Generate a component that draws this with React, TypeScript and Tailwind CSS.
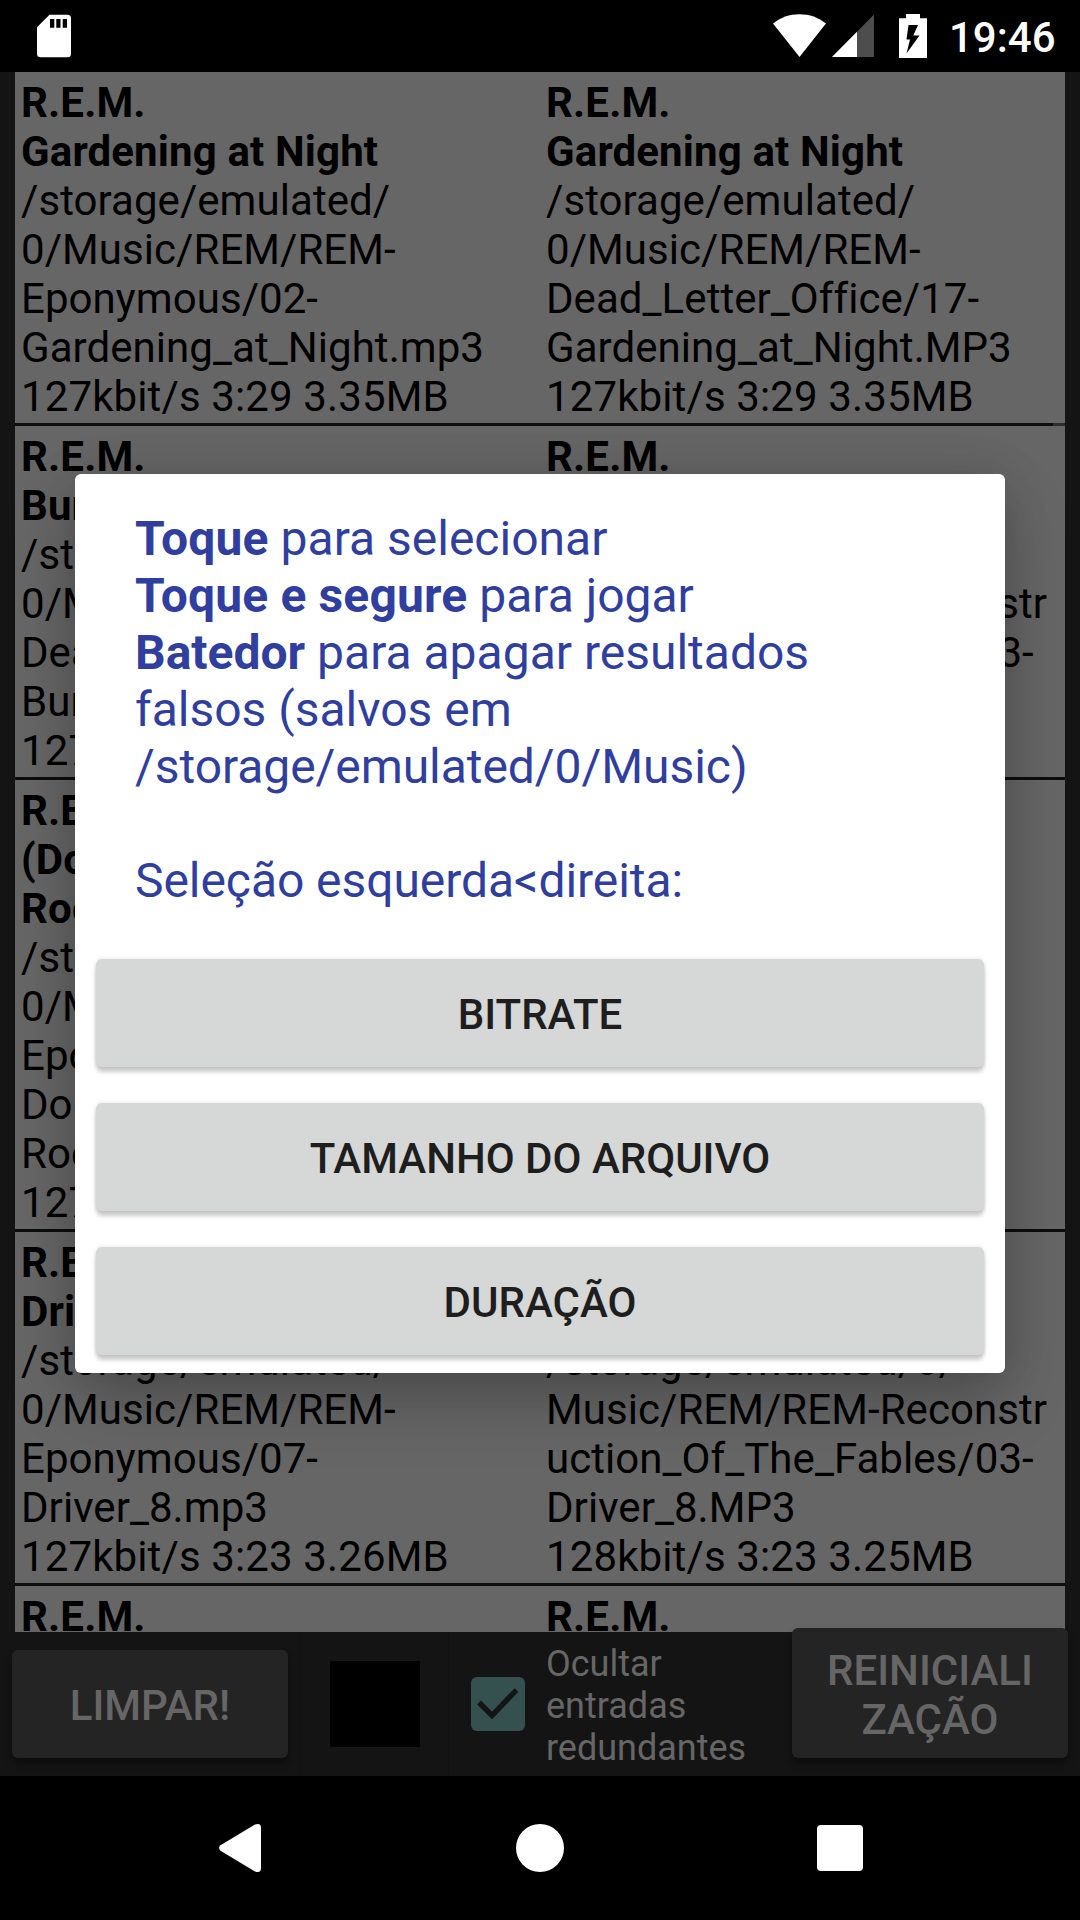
import { clsx } from 'clsx'

interface Track {
  artist: string
  title: string[]
  path: string[]
  info: string
}

const pairs: [Track, Track][] = [
  [
    {
      artist: 'R.E.M.',
      title: ['Gardening at Night'],
      path: ['/storage/emulated/', '0/Music/REM/REM-', 'Eponymous/02-', 'Gardening_at_Night.mp3'],
      info: '127kbit/s 3:29 3.35MB',
    },
    {
      artist: 'R.E.M.',
      title: ['Gardening at Night'],
      path: ['/storage/emulated/', '0/Music/REM/REM-', 'Dead_Letter_Office/17-', 'Gardening_at_Night.MP3'],
      info: '127kbit/s 3:29 3.35MB',
    },
  ],
  [
    {
      artist: 'R.E.M.',
      title: ['Burning Down'],
      path: ['/storage/emulated/', '0/Music/REM/REM-', 'Dead_Letter_Office/03-', 'Burning_Down.MP3'],
      info: '127kbit/s 4:12 4.03MB',
    },
    {
      artist: 'R.E.M.',
      title: ['Burning Down'],
      path: ['/storage/emulated/0/', 'Music/REM/REM-Reconstr', 'uction_Of_The_Fables/03-', 'Burning_Down.MP3'],
      info: '128kbit/s 4:12 4.03MB',
    },
  ],
  [
    {
      artist: 'R.E.M.',
      title: ["(Don't Go Back To)", 'Rockville'],
      path: ['/storage/emulated/', '0/Music/REM/REM-', 'Eponymous/05-', "Don't_Go_Back_To_", 'Rockville.mp3'],
      info: '127kbit/s 4:32 4.36MB',
    },
    {
      artist: 'R.E.M.',
      title: ["(Don't Go Back To)", 'Rockville'],
      path: ['/storage/emulated/', '0/Music/REM/REM-', 'Reckoning/09-', "Don't_Go_Back_To_", 'Rockville.MP3'],
      info: '128kbit/s 4:32 4.35MB',
    },
  ],
  [
    {
      artist: 'R.E.M.',
      title: ['Driver 8'],
      path: ['/storage/emulated/', '0/Music/REM/REM-', 'Eponymous/07-', 'Driver_8.mp3'],
      info: '127kbit/s 3:23 3.26MB',
    },
    {
      artist: 'R.E.M.',
      title: ['Driver 8'],
      path: ['/storage/emulated/0/', 'Music/REM/REM-Reconstr', 'uction_Of_The_Fables/03-', 'Driver_8.MP3'],
      info: '128kbit/s 3:23 3.25MB',
    },
  ],
  [
    { artist: 'R.E.M.', title: [], path: [], info: '' },
    { artist: 'R.E.M.', title: [], path: [], info: '' },
  ],
]

const sortOptions = ['Bitrate', 'Tamanho do arquivo', 'Duração']

export default function App() {
  return (
    <div className="relative flex h-[1920px] w-[1080px] flex-col overflow-hidden bg-[#141414] font-['Roboto',sans-serif]">
      <StatusBar />
      <main className="mx-[15px] h-[1560px] shrink-0 overflow-hidden bg-[#666666]">
        {pairs.map((pair, i) => (
          <PairRow key={i} pair={pair} scrollMark={i === 0} />
        ))}
      </main>
      <BottomBar />
      <NavBar />
      <SelectDialog />
    </div>
  )
}

function StatusBar() {
  return (
    <header className="flex h-[72px] shrink-0 items-start bg-black pr-[24px] pl-[37px] text-white">
      <svg className="mt-[14px] h-[44px] w-[34px]" viewBox="0 0 34 44" fill="currentColor">
        <path d="M12.5 .7H30.5Q34 .7 34 4.2V39.8Q34 43.3 30.5 43.3H3.5Q0 43.3 0 39.8V13.2Z" />
        <path fill="#000" d="M13 5h4.3v8.7H13zM19.3 5h4.2v8.7h-4.2zM25.7 5H30v8.7h-4.3z" />
      </svg>
      <svg className="mt-[14px] ml-auto h-[43px] w-[53px]" viewBox="0 0 53 43" fill="currentColor">
        <path d="M26.5 43L0 9.6C7.5 3.5 16.5 .3 26.5 .3S45.5 3.5 53 9.6Z" />
      </svg>
      <svg className="mt-[14px] ml-[6px] h-[43px] w-[42px]" viewBox="0 0 42 43" fill="currentColor">
        <path d="M42 .5V43H0Z" fill="#4d4d4d" />
        <path d="M25 17.7V43H0Z" />
      </svg>
      <svg className="mt-[14px] ml-[25px] h-[44px] w-[28px]" viewBox="0 0 28 44">
        <path fill="#fff" d="M7 0H21V4.3H28V44H0V4.3H7Z" />
        <path fill="#000" d="M9.5 11H19L14.3 21.5H20.5L7.5 39.5L11 25.5H7.5Z" />
      </svg>
      <span className="mt-[13px] ml-[22px] w-[107px] text-[42px] leading-[49px] font-medium">19:46</span>
    </header>
  )
}

function PairRow({ pair, scrollMark }: { pair: [Track, Track]; scrollMark: boolean }) {
  return (
    <>
      <div className="grid grid-cols-2 pt-[6px] pb-[2px]">
        <TrackCell track={pair[0]} />
        <TrackCell track={pair[1]} />
      </div>
      {/* divider */}
      <div className="flex h-[3px] justify-end bg-[#0c0d0d]">
        {scrollMark && <div className="w-3 bg-[#2d2d2d]" />}
      </div>
    </>
  )
}

function TrackCell({ track }: { track: Track }) {
  return (
    <div className="pl-[6px] text-[42px] leading-[49px] whitespace-nowrap text-black">
      <div className="font-bold tracking-[0.14px]">
        <div>{track.artist}</div>
        {track.title.map((line) => (
          <div key={line}>{line}</div>
        ))}
      </div>
      <div className="tracking-[0.06px]">
        {track.path.map((line) => (
          <div key={line}>{line}</div>
        ))}
      </div>
      <div className="tracking-[0.12px]">{track.info}</div>
    </div>
  )
}

function BottomBar() {
  return (
    <div className="relative flex h-[144px] shrink-0 items-center bg-[#141414] pl-3 text-[#666666]">
      <DarkButton className="h-[108px] pt-[2px]">LIMPAR!</DarkButton>
      <div className="ml-3 flex h-full w-[149px] items-center justify-center border-x border-[#111111]">
        <div className="h-[86px] w-[90px] bg-black" />
      </div>
      <svg className="ml-[22px] h-[54px] w-[54px]" viewBox="0 0 54 54">
        <rect width="54" height="54" rx="6" fill="#34514f" />
        <path d="M8 25.5L21 38.5L45.5 13" fill="none" stroke="#141414" strokeWidth="5.4" />
      </svg>
      <div className="ml-[21px] w-[200px] pt-[4px] text-[36px] leading-[42px]">
        Ocultar
        <br />
        entradas
        <br />
        redundantes
      </div>
      <DarkButton className="mr-3 mb-[18px] ml-auto h-[130px] self-end pt-[4px]">
        REINICIALI
        <br />
        ZAÇÃO
      </DarkButton>
    </div>
  )
}

function DarkButton({ className, children }: { className: string; children: React.ReactNode }) {
  return (
    <button
      className={clsx(
        'w-[276px] shrink-0 rounded-[6px] bg-[#242424] text-[42px] leading-[49px] font-medium shadow-[0_5px_7px_rgba(0,0,0,0.4)]',
        className,
      )}
    >
      {children}
    </button>
  )
}

function NavBar() {
  return (
    <nav className="flex h-[144px] shrink-0 items-center bg-black pl-[219px] text-white">
      <svg className="h-[50px] w-[42px]" viewBox="0 -1 42 50" fill="currentColor">
        <path d="M1.5 21.3L36 .6Q42 -1.5 42 4V44Q42 49.5 36 47.4L1.5 26.7Q-1.3 24 1.5 21.3Z" />
      </svg>
      <div className="ml-[255px] h-[48px] w-[48px] rounded-full bg-white" />
      <div className="ml-[253px] h-[46px] w-[46px] rounded-[4px] bg-white" />
    </nav>
  )
}

function SelectDialog() {
  return (
    <div className="absolute top-[474px] left-[75px] h-[899px] w-[930px] rounded-[6px] bg-white px-[21px] pt-9 shadow-[0_0_45px_rgba(0,0,0,0.12),0_28px_64px_-6px_rgba(0,0,0,0.25)]">
      <p className="pl-[39px] text-[48px] leading-[57px] whitespace-nowrap text-[#303f9f]">
        <b className="tracking-[0.2px]">Toque</b> para selecionar
        <br />
        <b className="tracking-[0.14px]">Toque e segure</b> para jogar
        <br />
        <b>Batedor</b> para apagar resultados
        <br />
        falsos (salvos em
        <br />
        <span className="tracking-[-0.06px]">/storage/emulated/0/Music)</span>
        <br />
        <br />
        <span className="tracking-[-0.06px]">Seleção esquerda&lt;direita:</span>
      </p>
      <div className="mt-[50px] flex flex-col gap-9">
        {sortOptions.map((option) => (
          <button
            key={option}
            className="h-[108px] rounded-[6px] bg-[#d6d7d7] pt-[2px] text-[42px] leading-[49px] font-medium text-[#1e1e1e] uppercase shadow-[0_5px_4px_rgba(0,0,0,0.2),0_0_4px_rgba(0,0,0,0.12)]"
          >
            {option}
          </button>
        ))}
      </div>
    </div>
  )
}
